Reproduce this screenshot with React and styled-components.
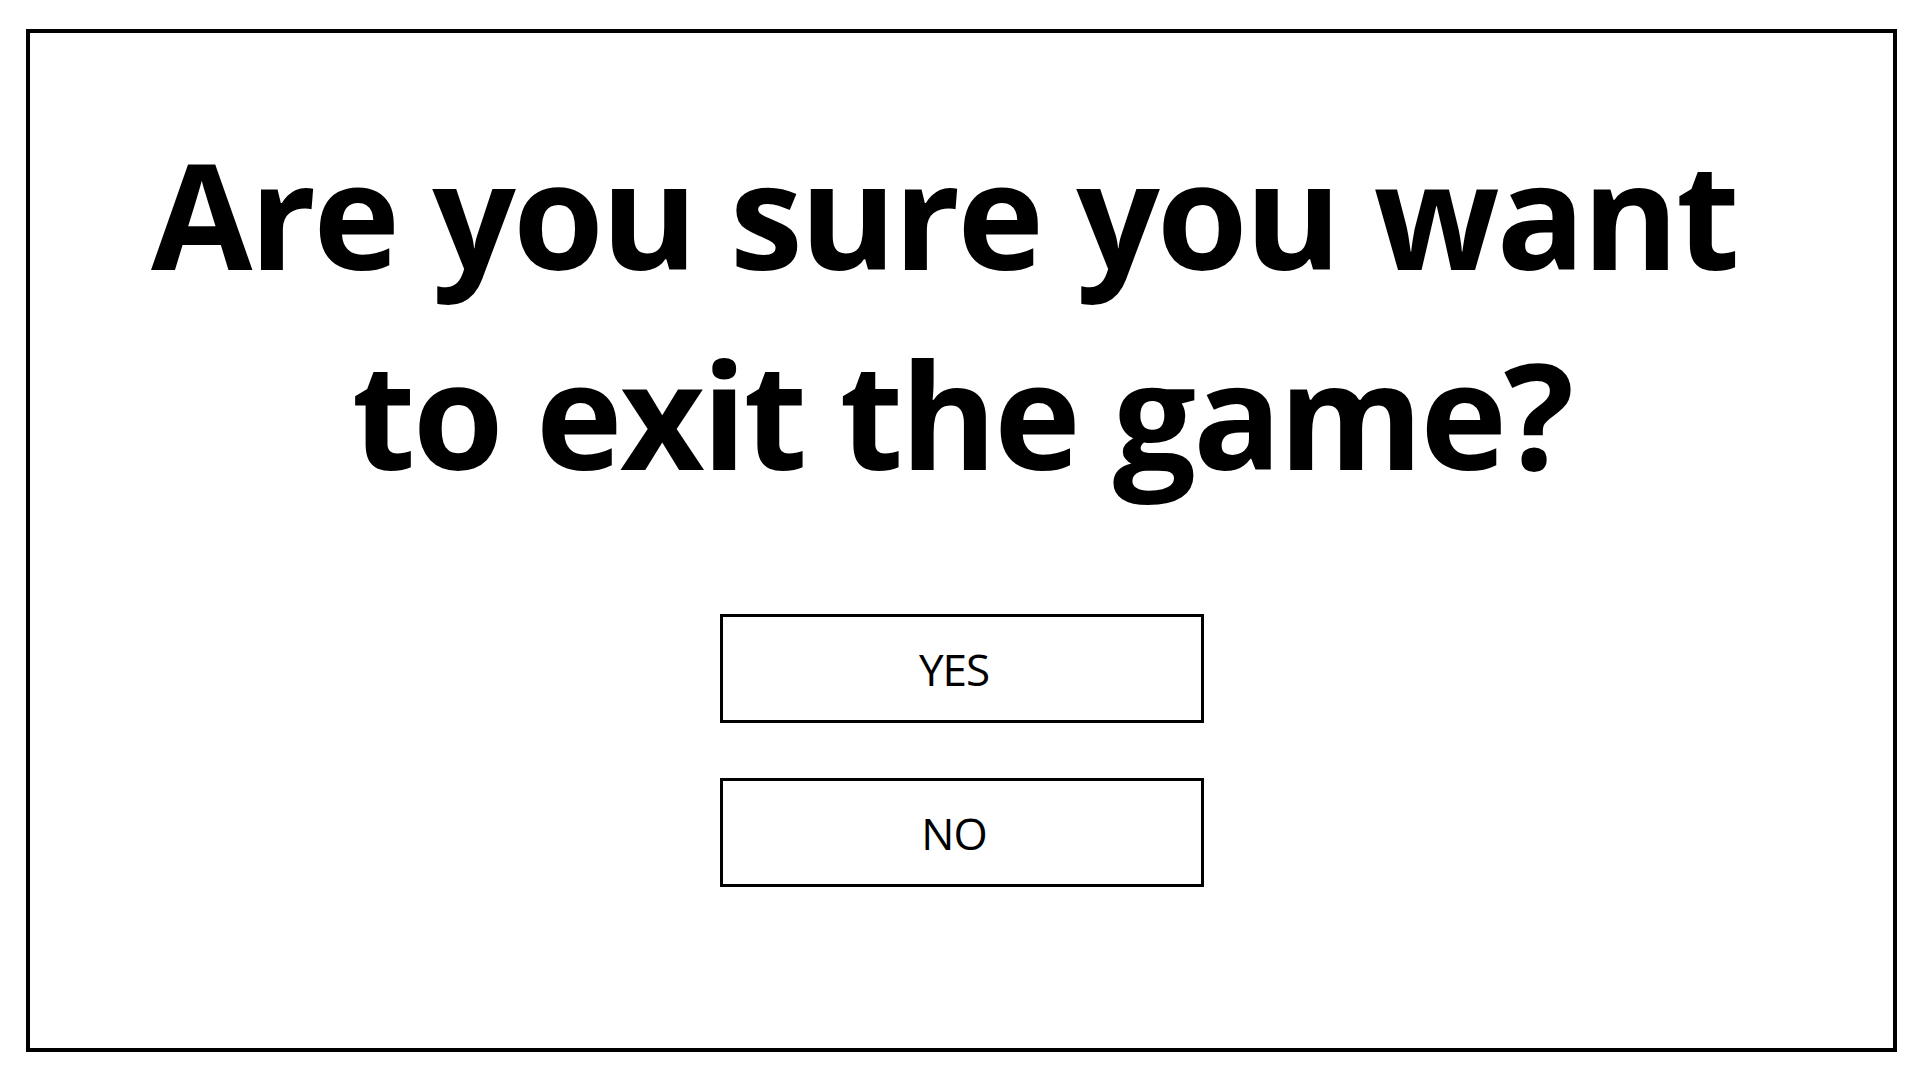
import React from "react";
import styled, { createGlobalStyle } from "styled-components";

const Global = createGlobalStyle`
  html, body { margin: 0; padding: 0; background: #fff; }
  body { font-family: "Open Sans", "Noto Sans", sans-serif; color: #000; }
`;

const Frame = styled.div`
  box-sizing: border-box;
  margin: 29px 23px 0 26px;
  height: 1023px;
  border: 4px solid #000;
  display: flex;
  flex-direction: column;
  align-items: center;
`;

const Title = styled.h1`
  margin: 80px 0 0;
  font-family: "Open Sans", "Noto Sans", sans-serif;
  font-weight: 700;
  font-size: 147px;
  letter-spacing: -3px;
  line-height: 200px;
  text-align: center;
  white-space: pre-wrap;
`;

const Buttons = styled.div`
  margin-top: 101px;
  display: flex;
  flex-direction: column;
  gap: 55px;
`;

const Button = styled.button`
  box-sizing: border-box;
  width: 484px;
  height: 109px;
  border: 3px solid #000;
  background: #fff;
  color: #000;
  font-family: "Open Sans", "Noto Sans", sans-serif;
  font-weight: 400;
  font-size: 44px;
  letter-spacing: -1px;
  padding: 0 15px 0 0;
  cursor: pointer;
`;

export default function App() {
  return (
    <>
      <Global />
      <Frame>
        <Title>
          {"Are you sure you want\u00a0"}
          <br />
          {"to exit the game?"}
        </Title>
        <Buttons>
          <Button>YES</Button>
          <Button>NO</Button>
        </Buttons>
      </Frame>
    </>
  );
}
